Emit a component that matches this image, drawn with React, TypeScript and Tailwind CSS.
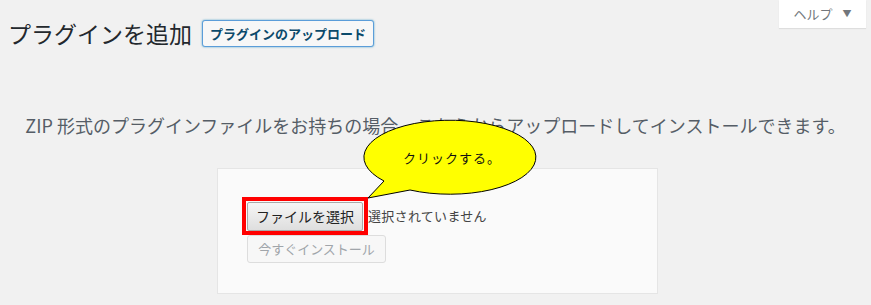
export default function App() {
  return (
    <main
      className="relative min-h-[305px] w-full bg-[#f1f1f1] text-[#23282d]"
      style={{ fontFamily: '"Noto Sans CJK JP", "Noto Sans", sans-serif' }}
    >
      {/* ヘルプ tab */}
      <div className="absolute right-[5px] top-0 flex h-[28px] w-[87px] items-center justify-center gap-[10px] bg-white shadow-[0_1px_1px_rgba(0,0,0,0.08)]">
        <span className="text-[13px] text-[#72777c]">ヘルプ</span>
        <span className="text-[9px] text-[#72777c]">▼</span>
      </div>

      <section className="flex flex-col">
        <div className="flex items-center gap-[10px] pl-[8px] pt-[19px]">
          <h1 className="text-[23px] font-normal leading-[29px]">プラグインを追加</h1>
          <button className="flex h-[27px] items-center rounded-[3px] border border-[#5b9dd9] bg-[#f7f7f7] px-[7px] text-[13px] font-bold text-[#0b4a6b] shadow-[0_0_2px_rgba(30,140,190,0.8)]">
            プラグインのアップロード
          </button>
        </div>

        <p className="mt-[65px] text-center text-[18px] leading-[25px] text-[#555d66]">
          ZIP 形式のプラグインファイルをお持ちの場合、こちらからアップロードしてインストールできます。
        </p>

        <div className="ml-[217px] mt-[30px] flex w-[441px] flex-col border border-[#e5e5e5] bg-[#fafafa] pb-[30px] pl-[24px] pt-[28px]">
          <div className="flex items-center">
            <div className="border-4 border-[#ff0000] px-px pt-px">
              <button className="flex h-[29px] w-[116px] items-center justify-center rounded-[2px] border border-[#a9a9a9] bg-gradient-to-b from-[#f6f6f6] to-[#dedede] text-[14px] text-[#222]">
                ファイルを選択
              </button>
            </div>
            <span className="text-[13px] tracking-[0.3px] text-[#444]">選択されていません</span>
          </div>
          <button
            disabled
            className="ml-[5px] flex h-[28px] w-[139px] items-center justify-center rounded-[3px] border border-[#dddddd] bg-[#f7f7f7] text-[13px] text-[#a0a5aa]"
          >
            今すぐインストール
          </button>
        </div>
      </section>

      {/* callout annotation */}
      <div className="pointer-events-none absolute left-[360px] top-[115px] h-[90px] w-[190px]">
        <svg width="190" height="90" viewBox="360 115 190 90">
          <path
            d="M384 181 L368 198 L410 190 A86 37 0 1 0 384 181 Z"
            fill="#ffff00"
            stroke="#000"
            strokeWidth="1"
          />
        </svg>
        <span className="absolute left-[43px] top-[33px] text-[13px] leading-[20px] tracking-[1px] text-[#111]">クリックする。</span>
      </div>
    </main>
  );
}
